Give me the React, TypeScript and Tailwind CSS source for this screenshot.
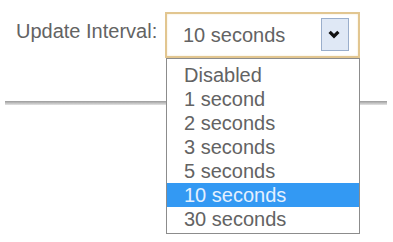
const options = ['Disabled', '1 second', '2 seconds', '3 seconds', '5 seconds', '10 seconds', '30 seconds']

export default function App() {
  const selected = '10 seconds'

  return (
    <div
      className="w-[393px] h-[242px] bg-white pt-[12px] overflow-hidden"
      style={{ fontFamily: '"Liberation Sans", Arial, sans-serif' }}
    >
      <div className="flex h-[46px] pl-[16px]">
        <span className="w-[149px] mt-[9px] text-[20px] leading-[20px] text-[#636363]">Update Interval:</span>

        <div className="relative">
          {/* select box */}
          <div className="w-[195px] h-[46px] border-2 border-[#e2c690] bg-white flex items-start justify-between shadow-[inset_0_0_2px_#f3e2c0]">
            <span className="pl-[16px] pt-[10px] text-[20px] leading-[22px] text-[#636363]">{selected}</span>
            <div className="mt-[4px] mr-[9px] w-[28px] h-[33px] bg-[#dfe8f5] border border-[#9aaecb] flex items-center justify-center">
              <svg width="12" height="9" viewBox="0 0 12 9" className="-ml-[2px] -mt-[1px]">
                <path d="M1.6 1.8 L6 6.2 L10.4 1.8" fill="none" stroke="#111" strokeWidth="3.2" />
              </svg>
            </div>
          </div>

          {/* open list */}
          <div className="absolute left-[1px] top-[46px] w-[194px] border border-[#8c8c8c] bg-white pt-[4px] pb-[2px] z-10">
            {options.map((opt) => (
              <div
                key={opt}
                className={`h-[24px] pl-[17px] text-[20px] leading-[24px] ${
                  opt === selected ? 'bg-[#3399f3] text-[#e4f0ff]' : 'text-[#636363]'
                }`}
              >
                {opt}
              </div>
            ))}
          </div>
        </div>
      </div>

      {/* separator behind the list */}
      <div className="mt-[43px] mx-[5px] w-[382px] h-[4px] bg-gradient-to-b from-[#9a9a9a] to-[#e4e4e4]" />
    </div>
  )
}
